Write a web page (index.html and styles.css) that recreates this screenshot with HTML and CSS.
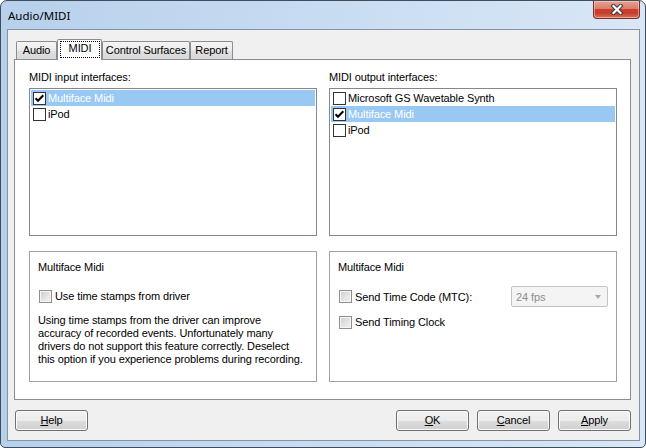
FILE: index.html
```html
<!DOCTYPE html>
<html>
<head>
<meta charset="utf-8">
<title>Audio/MIDI</title>
<link rel="stylesheet" href="styles.css">
</head>
<body>
<div class="window">
  <div class="titlebar">
    <span class="title">Audio/MIDI</span>
    <div class="close">
      <svg width="14" height="11" viewBox="0 0 14 11">
        <path d="M3.5 2 L10.5 9 M10.5 2 L3.5 9" stroke="#3a3a3a" stroke-width="4.2" stroke-linecap="square" fill="none"/>
        <path d="M3.5 2 L10.5 9 M10.5 2 L3.5 9" stroke="#ffffff" stroke-width="2.2" stroke-linecap="square" fill="none"/>
      </svg>
    </div>
  </div>
  <div class="client">
    <div class="tabs">
      <div class="tab w-audio">Audio</div>
      <div class="tab active w-midi"><span class="focus">MIDI</span></div>
      <div class="tab w-cs">Control Surfaces</div>
      <div class="tab w-report">Report</div>
    </div>
    <div class="panel">
      <div class="cols">
        <div class="col">
          <div class="label">MIDI input interfaces:</div>
          <div class="list">
            <div class="item sel"><span class="cb"><svg width="11" height="11" viewBox="0 0 11 11"><path d="M1.5 5.2 L4 7.8 L9.3 2.3" stroke="#000" stroke-width="2" fill="none"/></svg></span>Multiface Midi</div>
            <div class="item"><span class="cb"></span>iPod</div>
          </div>
        </div>
        <div class="col">
          <div class="label">MIDI output interfaces:</div>
          <div class="list">
            <div class="item"><span class="cb"></span>Microsoft GS Wavetable Synth</div>
            <div class="item sel"><span class="cb"><svg width="11" height="11" viewBox="0 0 11 11"><path d="M1.5 5.2 L4 7.8 L9.3 2.3" stroke="#000" stroke-width="2" fill="none"/></svg></span>Multiface Midi</div>
            <div class="item"><span class="cb"></span>iPod</div>
          </div>
        </div>
      </div>
      <div class="groups">
        <div class="group">
          <div class="gtitle">Multiface Midi</div>
          <div class="chkrow first"><span class="gcb"></span>Use time stamps from driver</div>
          <p class="para">Using time stamps from the driver can improve<br>accuracy of recorded events. Unfortunately many<br>drivers do not support this feature correctly. Deselect<br>this option if you experience problems during recording.</p>
        </div>
        <div class="group">
          <div class="gtitle">Multiface Midi</div>
          <div class="chkrow combo"><span class="gcb"></span>Send Time Code (MTC):
            <div class="dropdown"><span>24 fps</span><span class="arrow"></span></div>
          </div>
          <div class="chkrow second"><span class="gcb"></span>Send Timing Clock</div>
        </div>
      </div>
    </div>
    <div class="buttons">
      <div class="btn"><u>H</u>elp</div>
      <div class="spacer"></div>
      <div class="btn"><u>O</u>K</div>
      <div class="btn"><u>C</u>ancel</div>
      <div class="btn"><u>A</u>pply</div>
    </div>
  </div>
</div>
</body>
</html>
```
FILE: styles.css
```css
* { box-sizing: border-box; }
html, body { margin: 0; padding: 0; }
body {
  width: 646px;
  height: 448px;
  overflow: hidden;
  background: #ffffff;
  font-family: "Liberation Sans", Arial, sans-serif;
  font-size: 11px;
  letter-spacing: -0.1px;
  color: #000;
}
.window {
  width: 646px;
  height: 448px;
  border: 1px solid #3f4d5d;
  border-radius: 7px 7px 5px 5px;
  background: linear-gradient(to right, #b7d0eb 0%, #c6dbf1 45%, #d9e7f6 100%);
  padding: 0 5px 6px 6px;
  display: flex;
  flex-direction: column;
}
.titlebar {
  height: 28px;
  display: flex;
  align-items: flex-start;
  flex: none;
}
.title {
  font-family: "Noto Sans", "Open Sans", sans-serif;
  font-size: 11.5px;
  letter-spacing: 0;
  line-height: 16px;
  margin: 7px 0 0 1px;
  color: #000;
}
.close {
  margin-left: auto;
  width: 47px;
  height: 18px;
  border: 1px solid #7a2e24;
  border-top: 0;
  border-radius: 0 0 4px 4px;
  background: linear-gradient(#e6a293 0%, #dc7d69 45%, #c8402b 50%, #c4402b 72%, #dc735b 100%);
  box-shadow: inset 0 0 0 1px rgba(255, 225, 215, 0.5);
  display: flex;
  align-items: center;
  justify-content: center;
}
.client {
  flex: 1;
  border: 1px solid #8592a3;
  background: #f0f0f0;
  padding: 9px 8px 9px 6px;
  display: flex;
  flex-direction: column;
}
.tabs {
  display: flex;
  align-items: flex-end;
  height: 21px;
  margin-bottom: -1px;
  padding-left: 2px;
  position: relative;
  z-index: 1;
  flex: none;
}
.tab {
  height: 18px;
  margin-bottom: 1px;
  border: 1px solid #898c95;
  border-bottom: 0;
  border-radius: 2px 2px 0 0;
  background: linear-gradient(#f5f5f5 0%, #ebebeb 50%, #dfdfdf 51%, #d9d9d9 100%);
  text-align: center;
  line-height: 17px;
  white-space: nowrap;
}
.w-audio { width: 41px; }
.w-midi { width: 45px; }
.w-cs { width: 88px; }
.w-report { width: 43px; }
.tab.active {
  height: 21px;
  margin-bottom: 0;
  background: #ffffff;
}
.focus {
  display: block;
  margin: 1px 1px 0 2px;
  height: 17px;
  border: 1px dotted #000;
  line-height: 13px;
}
.panel {
  flex: none;
  height: 341px;
  border: 1px solid #898c95;
  background: #ffffff;
  padding: 11px 13px 17px 14px;
  display: flex;
  flex-direction: column;
}
.cols { display: flex; gap: 12px; }
.col { width: 288px; }
.label { height: 13px; line-height: 13px; margin-bottom: 4px; }
.list {
  height: 148px;
  border: 1px solid #828790;
  padding: 1px;
  background: #fff;
}
.item {
  height: 16px;
  display: flex;
  align-items: center;
  padding-left: 2px;
  white-space: nowrap;
}
.item.sel { background: #99c8f3; color: #ffffff; }
.cb {
  width: 13px;
  height: 13px;
  border: 1px solid #333;
  background: #fff;
  margin-right: 2px;
  flex: none;
  display: flex;
}
.groups { display: flex; gap: 12px; margin-top: 15px; }
.group {
  width: 288px;
  height: 131px;
  border: 1px solid #a0a0a0;
  padding: 9px 8px;
}
.gtitle { line-height: 13px; height: 13px; }
.chkrow {
  display: flex;
  align-items: center;
  height: 14px;
  white-space: nowrap;
}
.chkrow.first { margin-top: 15px; }
.chkrow.combo { margin-top: 12px; height: 21px; }
.chkrow.second { margin-top: 8px; }
.gcb {
  width: 13px;
  height: 13px;
  margin: 0 3px 0 1px;
  border: 1px solid #8f8f8f;
  background: linear-gradient(135deg, #cdcdcd 0%, #e6e6e6 60%, #f2f2f2 100%);
  box-shadow: inset 0 0 0 1px #f6f6f6;
  flex: none;
}
.para { margin: 11px 0 0 0; line-height: 13px; white-space: nowrap; }
.dropdown {
  margin-left: auto;
  width: 97px;
  height: 21px;
  border: 1px solid #c3c3c3;
  border-radius: 2px;
  background: #f4f4f4;
  color: #8d8d8d;
  display: flex;
  align-items: center;
  justify-content: space-between;
  padding: 0 6px 0 4px;
}
.arrow {
  width: 0;
  height: 0;
  border-left: 3.5px solid transparent;
  border-right: 3.5px solid transparent;
  border-top: 4px solid #a8a8a8;
}
.buttons {
  display: flex;
  gap: 8px;
  margin-top: 10px;
  padding-left: 1px;
  flex: none;
}
.spacer { flex: 1; }
.btn {
  width: 73px;
  height: 21px;
  border: 1px solid #707070;
  border-radius: 3px;
  background: linear-gradient(#f2f2f2 0%, #ebebeb 50%, #dddddd 51%, #cfcfcf 100%);
  box-shadow: inset 0 0 0 1px #fbfbfb;
  text-align: center;
  line-height: 19px;
}
.btn u { text-decoration: underline; text-underline-offset: 1px; }
```
